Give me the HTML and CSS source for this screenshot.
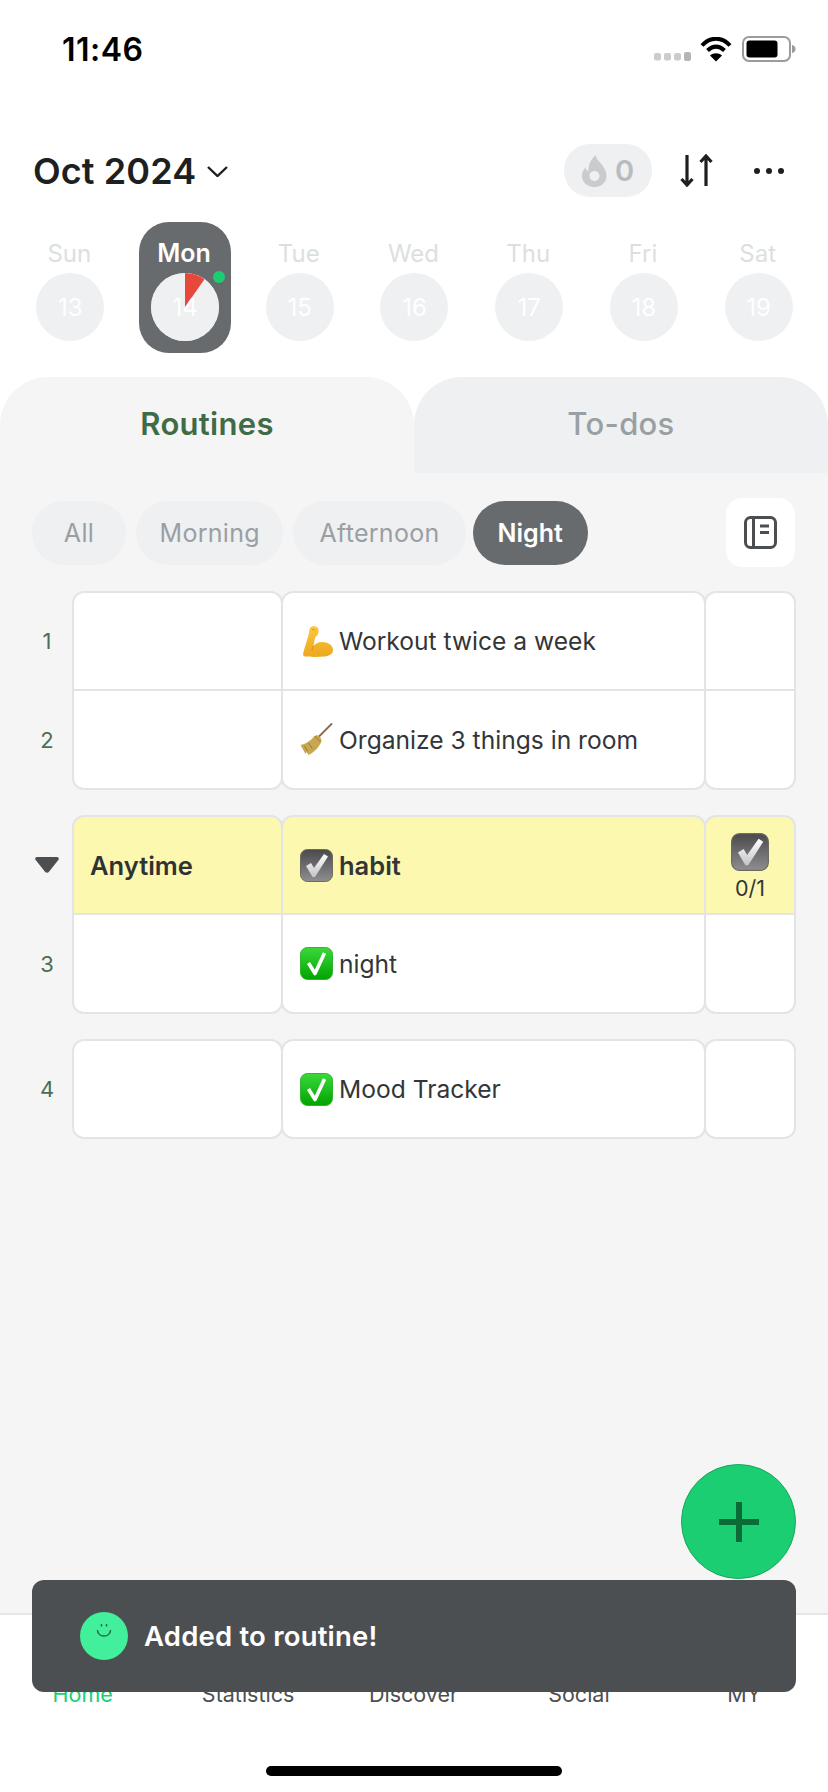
FILE: index.html
```html
<!DOCTYPE html>
<html lang="en">
<head>
<meta charset="utf-8">
<title>Routines</title>
<link rel="stylesheet" href="styles.css">
</head>
<body>
<svg class="defs" width="0" height="0" aria-hidden="true">
  <defs>
    <linearGradient id="gray" x1="0" y1="0" x2="0" y2="1"><stop offset="0" stop-color="#4a4a4c"/><stop offset="1" stop-color="#8e8e90"/></linearGradient>
    <linearGradient id="green" x1="0" y1="0" x2="0" y2="1"><stop offset="0" stop-color="#3bd93b"/><stop offset="1" stop-color="#00a400"/></linearGradient>
    <linearGradient id="arm" x1="0" y1="0" x2="0" y2="1"><stop offset="0" stop-color="#fbc83f"/><stop offset="1" stop-color="#eda81e"/></linearGradient>
    <linearGradient id="tick" x1="0" y1="0" x2="0" y2="1"><stop offset="0" stop-color="#fff"/><stop offset="1" stop-color="#c4c4c6"/></linearGradient>
    <symbol id="check-gray" viewBox="0 0 33 33">
      <rect x=".5" y=".5" width="32" height="32" rx="7" fill="url(#gray)" stroke="#6b6b60" stroke-width="1"/>
      <path d="M6 17l5-3 3 5L24 5l4 2.500L15 28h-2.500z" fill="url(#tick)"/>
    </symbol>
    <symbol id="check-green" viewBox="0 0 33 33">
      <rect x=".5" y=".5" width="32" height="32" rx="7" fill="url(#green)" stroke="#2fb52f" stroke-width="1"/>
      <path d="M8.500 16l6.500 10.500L24.500 6" fill="none" stroke="#fff" stroke-width="3.600" stroke-linejoin="round"/>
    </symbol>
    <symbol id="biceps" viewBox="0 0 30 31">
      <path fill="url(#arm)" d="M7 2C8 0 12-.5 14 1c2 1.500 2 5 1 7-1 2-2.500 2.500-3 4l-1.500 8C12 18 15 16 19 16c6 0 11 3 11 8 0 4-4 6-8 6.500-7 .5-15 .5-20 0-1.500 0-2.200-1.500-1.800-3C2 20 5 12 6 7c0-2 .5-3.500 1-5z"/>
      <path fill="none" stroke="#d98f14" stroke-width=".9" d="M9 4c1-1 2.500-1 3 .5M10.500 20c-1 1.500-1.500 3-1.500 5"/>
    </symbol>
    <symbol id="broom" viewBox="0 0 32 33">
      <path d="M31 1L17 15" stroke="#8a6a4f" stroke-width="1.800" stroke-linecap="round"/>
      <path fill="#c9a650" d="M14 13c3-2 7 1 7 5-2 6-7 11-13 14l-2-3-1 2-5-9c5-1 10-4 14-9z"/>
      <path fill="none" stroke="#927433" stroke-width=".9" d="M14 13l6 6M8 20l4 6M4 23l3 5"/>
    </symbol>
  </defs>
</svg>

<div class="app">
  <div class="status">
    <span class="time">11:46</span>
    <div class="status-icons">
      <svg class="signal" width="37" height="9" viewBox="0 0 37 9"><rect y="1" width="7" height="7.500" rx="2" fill="#ccc"/><rect x="10" y="1" width="7" height="7.500" rx="2" fill="#ccc"/><rect x="20" y="1" width="7" height="7.500" rx="2" fill="#ccc"/><rect x="30" width="7" height="9" rx="2" fill="#b5b5b5"/></svg>
      <svg class="wifi" width="32" height="25" viewBox="0 0 32 25"><path d="M2 8.500C10-.5 22-.5 30 8.500M7.500 13.500c5.500-5 11.500-5 17 0" fill="none" stroke="#000" stroke-width="4"/><path d="M16 24.500l-6-6c3.500-3 8.500-3 12 0z"/></svg>
      <svg class="battery" width="54" height="26" viewBox="0 0 54 26"><rect x="1" y="1" width="47" height="24" rx="6" fill="none" stroke="#9b9b9b" stroke-width="2"/><rect x="4.500" y="4.500" width="31" height="17" rx="3"/><path d="M50 9c2.500.5 3.500 2 3.500 4s-1 3.500-3.500 4z" fill="#9b9b9b"/></svg>
    </div>
  </div>

  <header class="header">
    <div class="month">
      <h1 class="month-title">Oct 2024</h1>
      <svg class="chevron" width="21" height="11" viewBox="0 0 21 11"><path d="M1 1l9.500 9L20 1" fill="none" stroke="#1d1f20" stroke-width="2.400"/></svg>
    </div>
    <div class="actions">
      <div class="streak">
        <svg width="25" height="32" viewBox="0 0 25 32"><path fill-rule="evenodd" fill="#c9cccd" d="M13.500 0c1 5 5 7 8 12 3 4.500 4 9 2 13.500-2 4-6 6.500-11 6.500S3 29.500 1 25.500C-1 21 0 16 3.500 12.500c.5 2 1.500 3.500 3 4C6 10 9 5 13.500 0zM12.500 16c-3 0-5 2.300-5 5s2.200 5 5 5 5-2.300 5-5-2-5-5-5z"/></svg>
        <span class="streak-count">0</span>
      </div>
      <svg class="sort" width="33" height="33" viewBox="0 0 33 33"><path d="M7 1v30M1.500 25l5.500 6 5.500-6M26 32V2M20.500 8L26 2l5.500 6" fill="none" stroke="#1d1f20" stroke-width="3.200"/></svg>
      <svg class="more" width="32" height="8" viewBox="0 0 32 8"><circle cx="4" cy="4" r="3"  fill="#1d1f20"/><circle cx="16" cy="4" r="3"  fill="#1d1f20"/><circle cx="28" cy="4" r="3"  fill="#1d1f20"/></svg>
    </div>
  </header>

  <div class="days">
    <div class="day"><span class="day-name">Sun</span><span class="day-num">13</span></div>
    <div class="day active">
      <span class="day-name">Mon</span>
      <span class="day-num">
        <svg class="pie" width="68" height="68" viewBox="0 0 68 68"><circle cx="34" cy="34" r="34" fill="#eef0f1"/><path d="M34 34V0a34 34 0 0 1 19.500 6.200z" fill="#e8483a"/></svg>
        <span class="num-label">14</span>
      </span>
      <span class="dot"></span>
    </div>
    <div class="day"><span class="day-name">Tue</span><span class="day-num">15</span></div>
    <div class="day"><span class="day-name">Wed</span><span class="day-num">16</span></div>
    <div class="day"><span class="day-name">Thu</span><span class="day-num">17</span></div>
    <div class="day"><span class="day-name">Fri</span><span class="day-num">18</span></div>
    <div class="day"><span class="day-name">Sat</span><span class="day-num">19</span></div>
  </div>

  <div class="tabs">
    <div class="tab current">Routines</div>
    <div class="tab">To-dos</div>
  </div>

  <main class="content">
    <div class="filters">
      <span class="pill all">All</span>
      <span class="pill">Morning</span>
      <span class="pill wide">Afternoon</span>
      <span class="pill selected">Night</span>
      <div class="book">
        <svg width="33" height="33" viewBox="0 0 33 33"><rect x="1.500" y="1.500" width="30" height="30" rx="5" fill="none" stroke="#4c4f51" stroke-width="3"/><path d="M9.500 2v29M16 10h9M16 16.500h9" fill="none" stroke="#4c4f51" stroke-width="3"/></svg>
      </div>
    </div>

    <section class="group">
      <div class="row first">
        <div class="index">1</div>
        <div class="cell"></div>
        <div class="cell name"><svg class="emoji arm" width="30" height="31"><use href="#biceps"/></svg><span>Workout twice a week</span></div>
        <div class="cell"></div>
      </div>
      <div class="row last">
        <div class="index">2</div>
        <div class="cell"></div>
        <div class="cell name"><svg class="emoji" width="33" height="33"><use href="#broom"/></svg><span>Organize 3 things in room</span></div>
        <div class="cell"></div>
      </div>
    </section>

    <section class="group">
      <div class="row first head">
        <div class="index"><svg width="24" height="16" viewBox="0 0 24 16"><path d="M2 0h20c1.500 0 2.300 1.500 1.500 2.800L14 14.800c-1 1.300-3 1.300-4 0L.5 2.800C-.3 1.500.5 0 2 0z" fill="#4c4f51"/></svg></div>
        <div class="cell label">Anytime</div>
        <div class="cell name"><svg class="emoji" width="33" height="33"><use href="#check-gray"/></svg><span>habit</span></div>
        <div class="cell goal"><svg width="38" height="38"><use href="#check-gray"/></svg><span class="goal-text">0/1</span></div>
      </div>
      <div class="row last">
        <div class="index">3</div>
        <div class="cell"></div>
        <div class="cell name"><svg class="emoji" width="33" height="33"><use href="#check-green"/></svg><span>night</span></div>
        <div class="cell"></div>
      </div>
    </section>

    <section class="group">
      <div class="row first last">
        <div class="index">4</div>
        <div class="cell"></div>
        <div class="cell name"><svg class="emoji" width="33" height="33"><use href="#check-green"/></svg><span>Mood Tracker</span></div>
        <div class="cell"></div>
      </div>
    </section>
  </main>

  <nav class="nav">
    <span class="nav-item on">Home</span>
    <span class="nav-item">Statistics</span>
    <span class="nav-item">Discover</span>
    <span class="nav-item">Social</span>
    <span class="nav-item">MY</span>
  </nav>

  <button class="fab" aria-label="Add">
    <svg width="40" height="40" viewBox="0 0 40 40"><path d="M20 0v40M0 20h40" stroke="#0b6b36" stroke-width="6"/></svg>
  </button>

  <div class="toast">
    <span class="smile">
      <svg width="16" height="16" viewBox="0 0 16 16"><path d="M1.500 7c0 8 13 8 13 0M5.500 1v2.500M10.500 1v2.500" fill="none" stroke="#1f6b45" stroke-width="1.500"/></svg>
    </span>
    <span class="toast-text">Added to routine!</span>
  </div>

  <div class="home-bar"></div>
</div>
</body>
</html>
```
FILE: styles.css
```css
* { box-sizing: border-box; }
html, body { margin: 0; padding: 0; background: #fff; }
body { font-family: "Inter", "Noto Sans", sans-serif; color: #333638; }
.defs { position: absolute; }
.app { position: relative; width: 828px; height: 1792px; display: flex; flex-direction: column; overflow: hidden; background: #fff; }

.status { height: 98px; flex: none; display: flex; justify-content: space-between; align-items: center; padding: 0 32px 0 62px; }
.time { font-size: 32px; font-weight: 600; color: #000; letter-spacing: .5px; }
.status-icons { display: flex; align-items: center; gap: 10px; }
.signal { margin: 15px -1px 0 0; }

.header { height: 53px; margin-top: 46px; flex: none; display: flex; justify-content: space-between; align-items: center; padding: 0 43px 0 33px; }
.month { display: flex; align-items: center; gap: 11px; }
.month-title { margin: 0; font-size: 36px; font-weight: 600; color: #1d1f20; line-height: 1; letter-spacing: .1px; }
.chevron { margin-top: 2px; }
.actions { display: flex; align-items: center; }
.streak { width: 88px; height: 53px; border-radius: 26px; background: #eef0f1; display: flex; align-items: center; gap: 8px; padding-left: 18px; }
.streak-count { font-size: 29px; font-weight: 600; color: #b9bcbe; }
.sort { margin-left: 28px; }
.more { margin-left: 40px; }

.days { height: 131px; margin-top: 25px; flex: none; display: grid; grid-template-columns: repeat(7, 1fr); padding: 0 12px 0 13px; }
.day { position: relative; justify-self: center; width: 92px; display: flex; flex-direction: column; align-items: center; padding-top: 12px; border-radius: 30px; }
.day-name { height: 39px; line-height: 39px; font-size: 24px; color: #dcdfe0; margin-left: -2px; }
.day-num { position: relative; width: 68px; height: 68px; border-radius: 50%; background: #eef0f1; color: #fff; font-size: 24px; display: flex; align-items: center; justify-content: center; }
.day.active { background: #676b6e; }
.day.active .day-name { color: #fff; font-weight: 600; font-size: 25px; }
.pie { position: absolute; inset: 0; }
.num-label { position: relative; }
.dot { position: absolute; left: 74px; top: 49px; width: 12px; height: 12px; border-radius: 50%; background: #1bce72; }

.tabs { height: 96px; margin-top: 24px; flex: none; display: grid; grid-template-columns: 414px 414px; }
.tab { border-radius: 48px 48px 0 0; background: #eef0f1; color: #9a9fa3; font-size: 31px; font-weight: 500; letter-spacing: .3px; display: flex; align-items: center; justify-content: center; padding-bottom: 3px; }
.tab.current { background: #f5f5f6; color: #3f6b47; font-weight: 600; }

.content { flex: 1; min-height: 0; background: #f5f5f6; padding: 25px 32px 0 0; }
.filters { height: 69px; display: flex; align-items: center; gap: 10px; padding: 0 1px 0 32px; }
.pill { height: 64px; padding: 0 23.500px; border-radius: 32px; background: #eef0f1; color: #9a9fa3; font-size: 25px; letter-spacing: .3px; display: flex; align-items: center; justify-content: center; }
.pill.all { width: 94px; }
.pill.wide { padding: 0 26px; }
.pill.selected { background: #676b6e; color: #fff; font-weight: 600; letter-spacing: 0; padding: 0 25px; margin-left: -3px; }
.book { margin-left: auto; width: 69px; height: 69px; border-radius: 16px; background: #fff; display: flex; align-items: center; justify-content: center; }

.group { margin-top: 25px; }
.filters + .group { margin-top: 24px; }
.row { display: grid; grid-template-columns: 72px 211px 423px 90px; height: 100px; }
.row + .row { height: 101px; margin-top: -2px; }
.index { display: flex; align-items: center; justify-content: center; padding-left: 22px; color: #4a6f52; font-size: 22px; }
.cell { background: #fff; border: 2px solid #e2e4e5; display: flex; align-items: center; }
.cell + .cell { margin-left: -2px; }
.first .cell { border-top-left-radius: 12px; border-top-right-radius: 12px; }
.last .cell { border-bottom-left-radius: 12px; border-bottom-right-radius: 12px; }
.head .cell { background: #fdf8b0; }
.name { padding-left: 17px; gap: 6px; font-size: 24.600px; color: #333638; }
.emoji { flex: none; }
.arm { margin-left: 3px; }
.head .name span, .label { font-weight: 600; }
.head .name span { font-size: 25.500px; }
.label { padding-left: 16px; font-size: 25.500px; color: #2f3234; }
.goal { flex-direction: column; justify-content: center; gap: 4px; padding-top: 3px; }
.goal-text { font-size: 21.500px; color: #333638; }

.nav { height: 179px; flex: none; border-top: 2px solid #e5e6e7; display: grid; grid-template-columns: repeat(5, 1fr); padding: 66px 1px 0 0; background: #fff; }
.nav-item { text-align: center; font-size: 21.500px; line-height: 26px; color: #4c4f51; }
.nav-item.on { color: #1bce72; }

.fab { position: absolute; left: 681px; top: 1464px; width: 115px; height: 115px; padding: 0; border-radius: 50%; background: #1bce72; border: 1px solid #16a85f; display: flex; align-items: center; justify-content: center; }
.toast { position: absolute; left: 32px; top: 1580px; width: 764px; height: 112px; border-radius: 12px; background: #4c4f51; display: flex; align-items: center; gap: 16px; padding-left: 48px; }
.smile { width: 48px; height: 48px; border-radius: 50%; background: #42ef9a; display: flex; justify-content: center; padding-top: 11px; }
.toast-text { color: #fff; font-size: 27.500px; font-weight: 600; letter-spacing: .2px; }
.home-bar { position: absolute; left: 266px; top: 1766px; width: 296px; height: 10px; border-radius: 5px; background: #000; }
```
